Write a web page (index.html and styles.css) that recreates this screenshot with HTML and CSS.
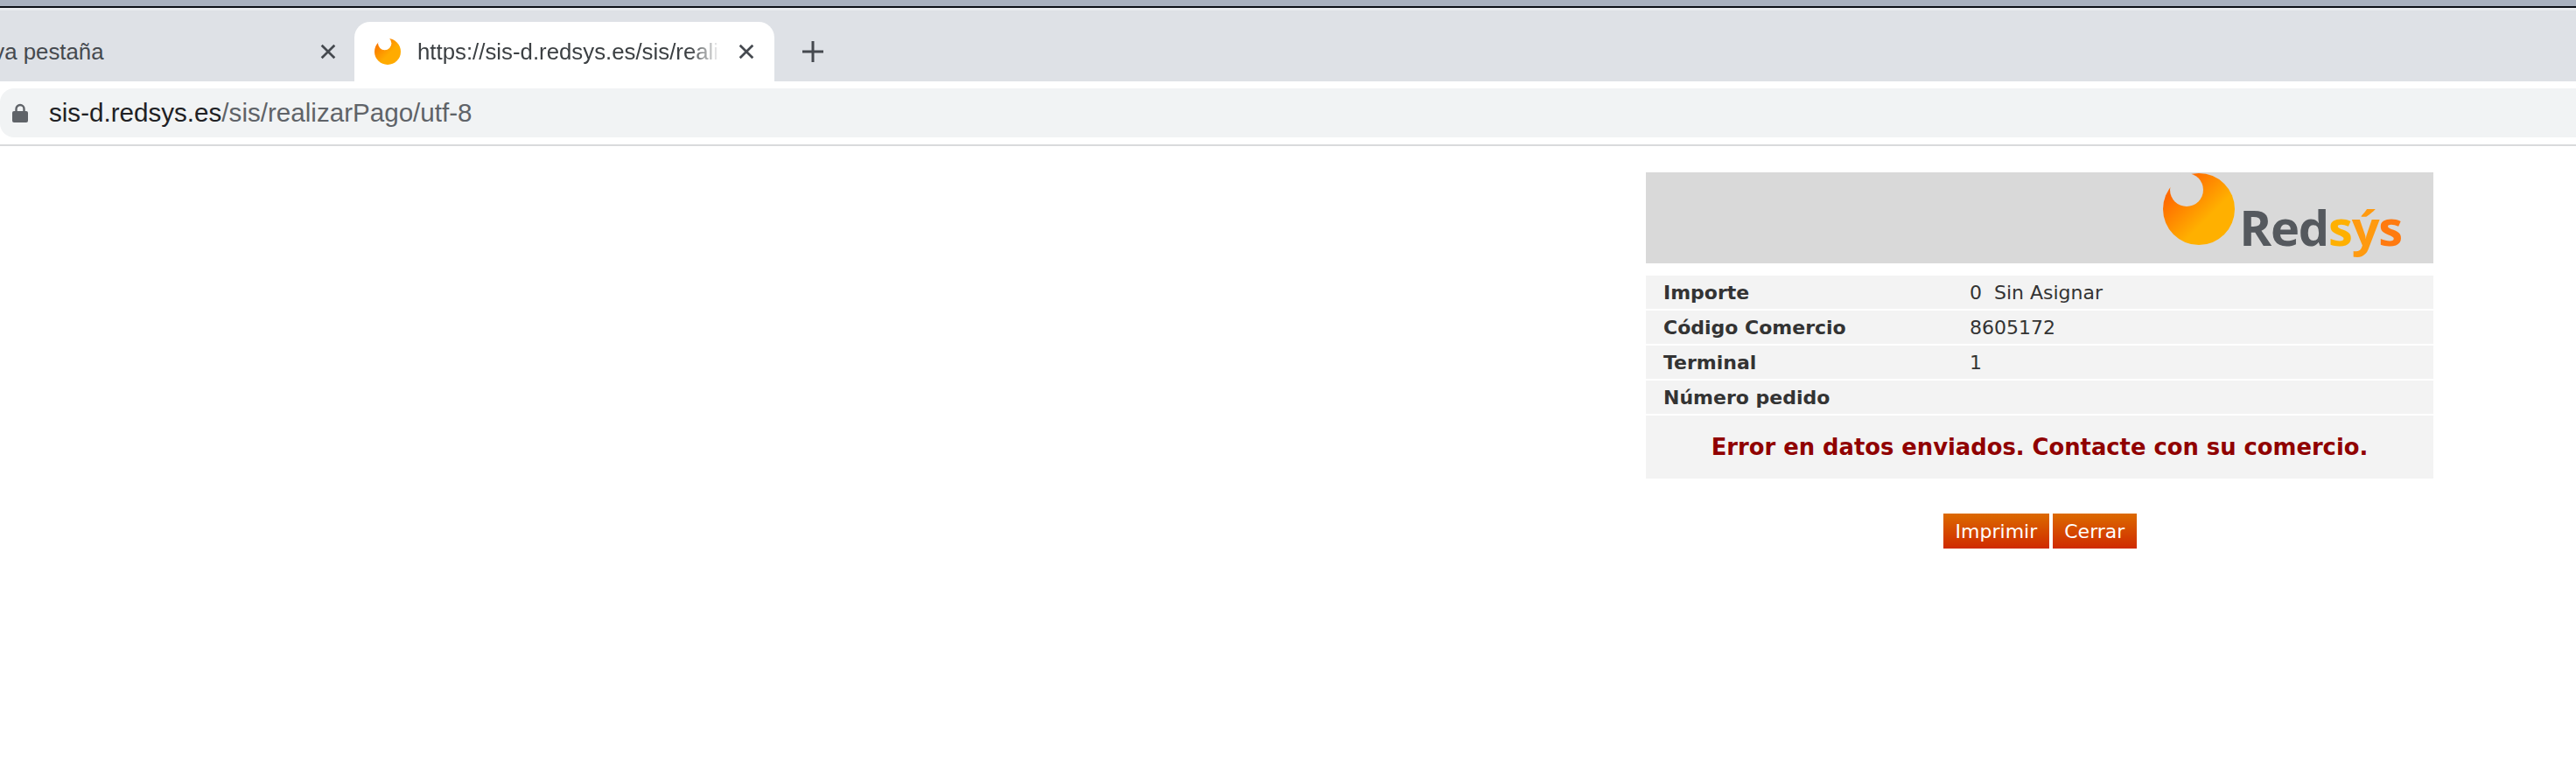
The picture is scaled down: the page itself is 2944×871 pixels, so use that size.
FILE: index.html
```html
<!DOCTYPE html>
<html lang="es">

<head>
    <meta charset="UTF-8">
    <title>Redsys</title>
    <link rel="stylesheet" href="styles.css">
</head>

<body>
    <div class="desktopEdge"></div>

    <div class="tabStrip">
        <div class="tab">
            <span class="tabTitle oldTitle">Nueva pestaña</span>
            <svg class="closeIcon" viewBox="0 0 16 16"><path d="M1.5 1.5 14.5 14.5M14.5 1.5 1.5 14.5"/></svg>
        </div>
        <div class="tab activeTab">
            <svg class="favicon" viewBox="0 0 82 82">
                <defs>
                    <linearGradient id="favGrad" x1="0" y1="0.1" x2="0.7" y2="0.8">
                        <stop offset="0.05" stop-color="#f97000"/>
                        <stop offset="0.75" stop-color="#ffab00"/>
                    </linearGradient>
                </defs>
                <circle cx="41" cy="41" r="41" fill="url(#favGrad)"/>
                <circle cx="32" cy="15" r="21" fill="#fff"/>
            </svg>
            <span class="tabTitle fadeTitle">https://sis-d.redsys.es/sis/realizarPago</span>
            <svg class="closeIcon" viewBox="0 0 16 16"><path d="M1.5 1.5 14.5 14.5M14.5 1.5 1.5 14.5"/></svg>
        </div>
        <svg class="plusIcon" viewBox="0 0 24 24"><path d="M12 0V24M0 12H24"/></svg>
    </div>

    <div class="toolbar">
        <div class="addressBar">
            <svg class="lockIcon" viewBox="0 0 18 22">
                <path class="lockBody" d="M2 9H16Q18 9 18 11V20Q18 22 16 22H2Q0 22 0 20V11Q0 9 2 9Z"/>
                <path class="lockLoop" d="M4.5 10V6.5A4.5 4.5 0 0 1 13.5 6.5V10"/>
            </svg>
            <span class="urlHost">sis-d.redsys.es</span><span class="urlPath">/sis/realizarPago/utf-8</span>
        </div>
    </div>

    <div class="page">
        <div class="paymentBox">
            <div class="banner">
                <svg class="logoMark" viewBox="0 0 82 82">
                    <defs>
                        <linearGradient id="logoGrad" x1="0.15" y1="0.1" x2="0.65" y2="0.6">
                            <stop offset="0.15" stop-color="#ff6a00"/>
                            <stop offset="1" stop-color="#ffb000"/>
                        </linearGradient>
                    </defs>
                    <circle cx="41" cy="41" r="41" fill="url(#logoGrad)"/>
                    <circle cx="27" cy="19" r="19" fill="#d9d9d9"/>
                </svg>
                <span class="logoText">Red<span class="logoS1">s</span><span class="logoY">ý</span><span class="logoS2">s</span></span>
            </div>

            <div class="infoRow"><span class="infoLabel">Importe</span><span class="infoValue">0&nbsp; Sin Asignar</span></div>
            <div class="infoRow"><span class="infoLabel">Código Comercio</span><span class="infoValue">8605172</span></div>
            <div class="infoRow"><span class="infoLabel">Terminal</span><span class="infoValue">1</span></div>
            <div class="infoRow"><span class="infoLabel">Número pedido</span><span class="infoValue"></span></div>
            <div class="errorRow">Error en datos enviados. Contacte con su comercio.</div>

            <div class="buttons">
                <button class="button">Imprimir</button>
                <button class="button">Cerrar</button>
            </div>
        </div>
    </div>
</body>

</html>
```

FILE: styles.css
```css
html,
body {
    margin: 0;
    background-color: #fff;
}

body {
    height: 871px;
    overflow: hidden;
    font-family: 'Liberation Sans', Arial, sans-serif;
}

.desktopEdge {
    height: 7px;
    background-color: #a9b1c0;
    border-bottom: 2px solid #0c1018;
}

/* tabs */

.tabStrip {
    height: 84px;
    display: flex;
    align-items: flex-end;
    background-color: #dee1e6;
    border-top: 3px solid #e9ebef;
    box-sizing: border-box;
    overflow: hidden;
}

.tab {
    height: 68px;
    display: flex;
    align-items: center;
    box-sizing: border-box;
    color: #45494f;
    font-size: 25.8px;
}

.tab:first-child {
    width: 405px;
    padding-right: 21px;
}

.oldTitle {
    margin-left: -55px;
    flex: 1;
    white-space: nowrap;
}

.activeTab {
    width: 480px;
    padding: 0 22px 0 23px;
    background-color: #fff;
    border-radius: 18px 18px 0 0;
    color: #3c4043;
}

.favicon {
    width: 30px;
    height: 30px;
    margin-right: 19px;
    flex-shrink: 0;
}

.tabTitle {
    overflow: hidden;
    white-space: nowrap;
}

.fadeTitle {
    width: 346px;
    margin-right: 21px;
    -webkit-mask-image: linear-gradient(to right, #000 90%, transparent 100%);
    mask-image: linear-gradient(to right, #000 90%, transparent 100%);
}

.closeIcon {
    width: 18px;
    height: 18px;
    flex-shrink: 0;
    fill: none;
    stroke: #45494f;
    stroke-width: 2.4;
}

.plusIcon {
    width: 24px;
    height: 24px;
    margin: 0 0 22px 32px;
    fill: none;
    stroke: #45494f;
    stroke-width: 3;
}

/* address bar */

.toolbar {
    height: 74px;
    padding-top: 8px;
    box-sizing: border-box;
    border-bottom: 2px solid #d9dadc;
}

.addressBar {
    height: 56px;
    display: flex;
    align-items: center;
    padding-left: 14px;
    background-color: #f1f3f4;
    border-radius: 16px 0 0 16px;
    font-size: 29.6px;
}

.lockIcon {
    width: 18px;
    height: 22px;
    margin-right: 24px;
}

.lockBody {
    fill: #5f6368;
}

.lockLoop {
    fill: none;
    stroke: #5f6368;
    stroke-width: 2.4;
}

.urlHost {
    color: #202124;
}

.urlPath {
    color: #5f6368;
}

/* payment box */

.page {
    display: flex;
    padding: 30px 163px 0 0;
    justify-content: flex-end;
    font-family: 'DejaVu Sans', Verdana, sans-serif;
    font-size: 22px;
    color: #333;
}

.paymentBox {
    width: 900px;
}

.banner {
    height: 104px;
    display: flex;
    justify-content: flex-end;
    background-color: #d9d9d9;
    margin-bottom: 14px;
    padding: 1px 36px 0 0;
    box-sizing: border-box;
}

.logoMark {
    width: 82px;
    height: 82px;
    margin-right: 5px;
}

.logoText {
    font-family: 'Open Sans', sans-serif;
    font-weight: 700;
    font-size: 56px;
    letter-spacing: -1.2px;
    line-height: 76px;
    margin-top: 23px;
    color: #55595e;
}

.logoS1 {
    color: #ffb000;
}

.logoY {
    color: #ff9a10;
}

.logoS2 {
    color: #ff7a10;
}

.infoRow {
    height: 38px;
    display: flex;
    align-items: center;
    margin-bottom: 2px;
    padding-left: 20px;
    background-color: #f3f3f3;
}

.infoLabel {
    width: 350px;
    font-weight: bold;
}

.errorRow {
    height: 72px;
    display: flex;
    align-items: center;
    justify-content: center;
    background-color: #f3f3f3;
    color: #900000;
    font-size: 25.8px;
    font-weight: bold;
}

.buttons {
    display: flex;
    justify-content: center;
    gap: 4px;
    margin-top: 40px;
    padding-left: 1px;
}

.button {
    height: 40px;
    padding: 0 13.5px;
    border: none;
    background: linear-gradient(to bottom, #dc6a00, #cf2a00);
    color: #fff;
    font-family: 'DejaVu Sans', Verdana, sans-serif;
    font-size: 22px;
}
```
